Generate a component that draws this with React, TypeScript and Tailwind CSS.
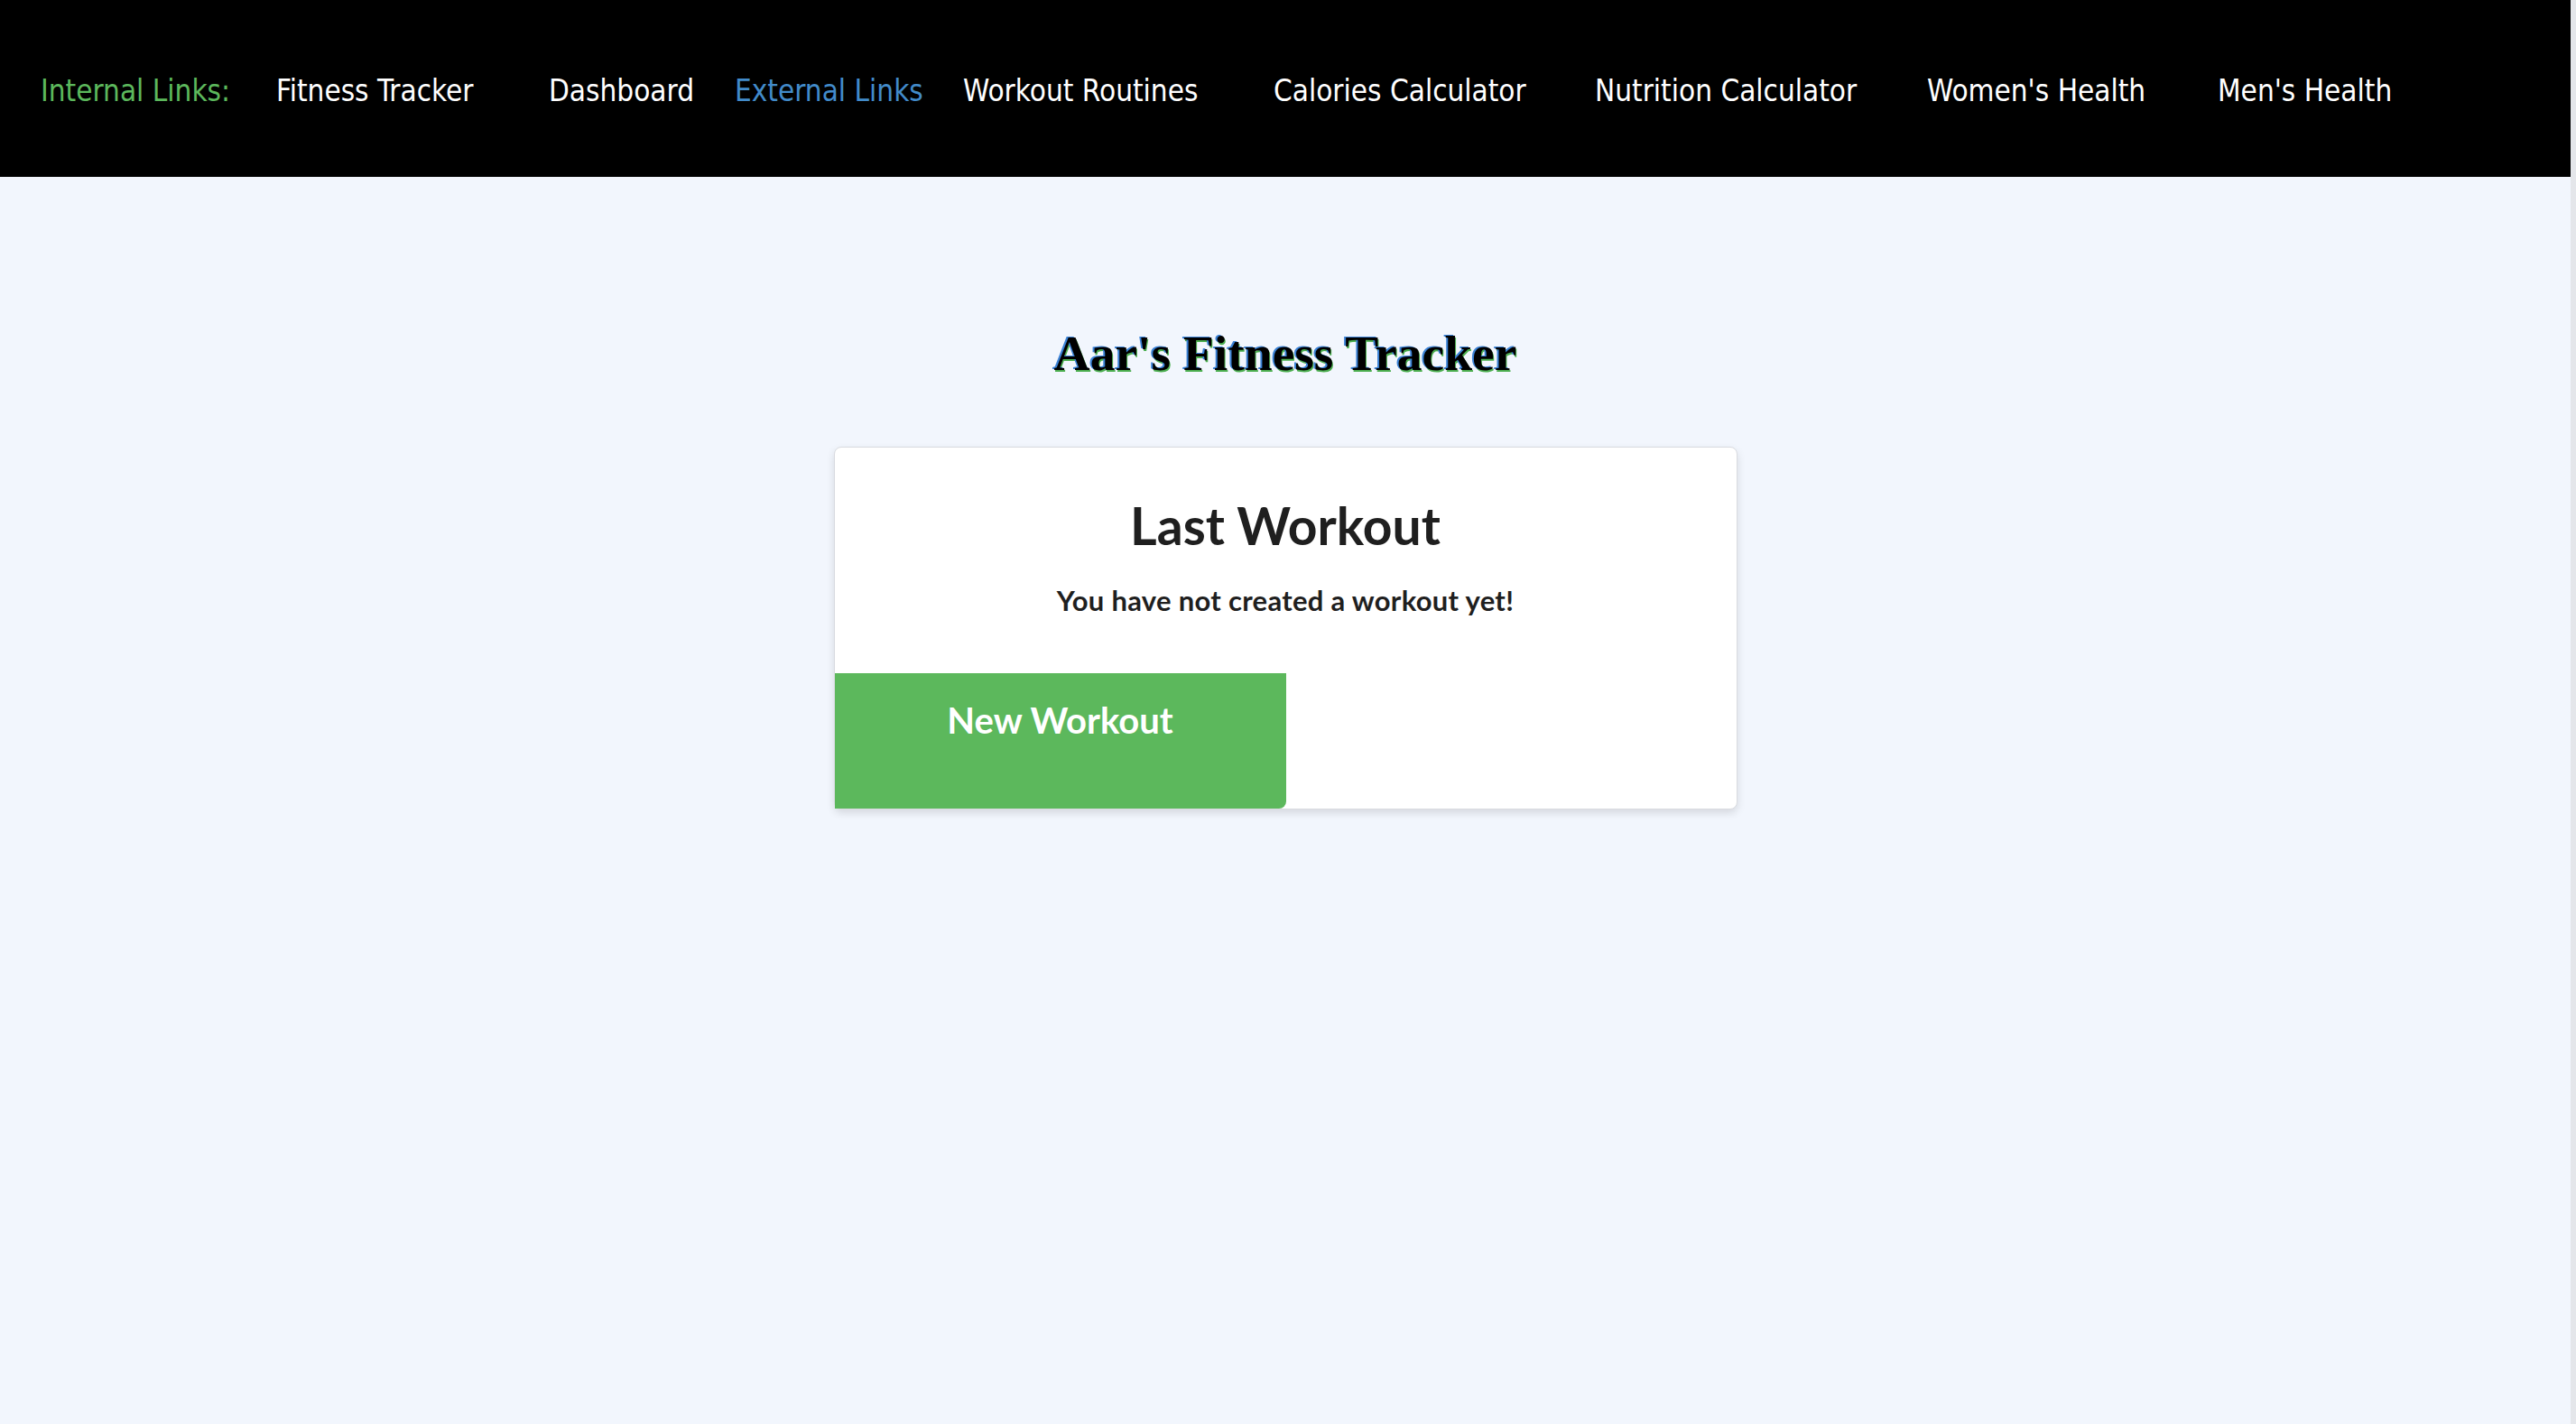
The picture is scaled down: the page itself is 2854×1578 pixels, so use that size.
import React from "react";

const navFont = { fontFamily: '"DejaVu Sans Condensed", "DejaVu Sans", Tahoma, sans-serif' };

export default function App() {
  return (
    <div className="min-h-screen flex bg-[#f2f6fd]">
      <div className="flex-1 flex flex-col">
        <nav
          className="h-[196px] bg-black flex items-center pl-[45px] pt-[4px] text-[33px] leading-none text-white"
          style={navFont}
        >
          <span className="w-[261px] shrink-0 text-[#5cb85c]">Internal Links:</span>
          <a className="w-[302px] shrink-0">Fitness Tracker</a>
          <a className="w-[206px] shrink-0">Dashboard</a>
          <span className="w-[253px] shrink-0 text-[#428bca]">External Links</span>
          <a className="w-[344px] shrink-0">Workout Routines</a>
          <a className="w-[356px] shrink-0">Calories Calculator</a>
          <a className="w-[368px] shrink-0">Nutrition Calculator</a>
          <a className="w-[322px] shrink-0">Women's Health</a>
          <a className="shrink-0">Men's Health</a>
        </nav>
        <main className="flex flex-col items-center">
          <h1
            className="mt-[168px] text-[55.5px] leading-none font-bold text-black font-['Liberation_Serif',serif] [text-shadow:-2px_-1px_0_#3b82d6,1px_2px_0_#4caf50]"
          >
            Aar's Fitness Tracker
          </h1>
          <div className="mt-[75px] w-[1001px] bg-white border border-[#d9dbe0] rounded-[8px] shadow-[0_4px_10px_rgba(0,0,0,0.12)] flex flex-col items-center font-['Lato',sans-serif] text-[#1f1f1f]">
            <h2 className="mt-[58px] text-[57px] leading-none font-bold">Last Workout</h2>
            <p className="mt-[39px] text-[31px] leading-none font-bold tracking-[0.3px]">You have not created a workout yet!</p>
            <button className="mt-[65px] self-start w-[500px] h-[150px] bg-[#5cb85c] text-white text-[40px] leading-none font-bold pt-[32px] flex justify-center items-start rounded-br-[8px]">
              New Workout
            </button>
          </div>
        </main>
      </div>
      <div className="w-[6px] bg-[#e4e6ea]" />
    </div>
  );
}
